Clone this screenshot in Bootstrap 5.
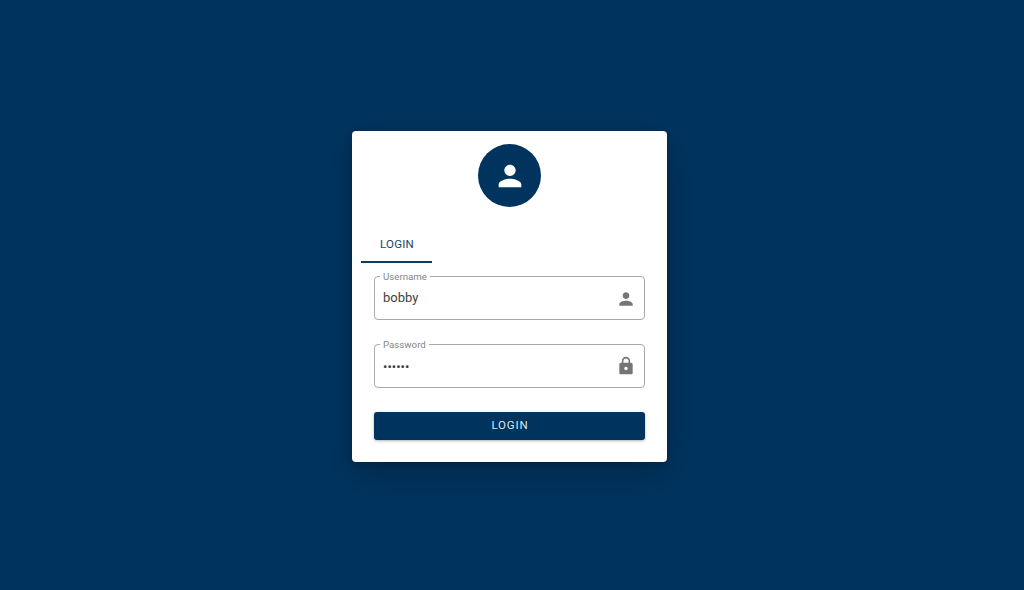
<!DOCTYPE html>
<html lang="en">
<head>
<meta charset="utf-8">
<title>Login</title>
<link href="https://cdn.jsdelivr.net/npm/bootstrap@5.3.0/dist/css/bootstrap.min.css" rel="stylesheet">
<style>
body { background: #00345f; font-family: Roboto, "Liberation Sans", sans-serif; }
.login-stage { min-height: 100vh; padding: 3px 5px 0 0; }
.login-panel { width: 315px; height: 331px; border: 0; border-radius: 4px; padding: 13px 10px 0; box-shadow: 0 12px 34px rgba(0,0,0,.22), 0 2px 6px rgba(0,0,0,.2); }
.avatar-disc { width: 63px; height: 63px; background: #00345f; align-self: center; flex: none; }
.avatar-disc svg { width: 34px; height: 34px; fill: #fff; }
.tab-row { margin: 18px 0 0 -1px; height: 38px; }
.tab-item { width: 71px; height: 38px; color: #1d4260; font-size: 11.5px; font-weight: 400; letter-spacing: .25px; border-bottom: 2px solid #0f3d58; padding: 3px 0 0 1px; }
.form-area { padding: 6px 12px 0 12px; }
.outline-field { border: 1px solid #a9a9a9; border-radius: 4px; padding: 0 8px; margin: 0; height: 51px; min-width: 0; }
.outline-field + .outline-field { margin-top: 17px; }
.outline-field legend { float: none; width: auto; font-size: 9.7px; line-height: 12px; color: #858585; padding: 2px 3px 0; margin: 0 0 0 -3px; }
.field-input { border: 0; outline: 0; padding: 0; background: transparent; color: #3d3d3d; font-size: 13px; font-family: Roboto, "Liberation Sans", sans-serif; height: 24px; min-width: 0; }
.field-input[type=text] { margin-bottom: 2px; }
.field-icon { width: 20px; height: 20px; fill: #757575; flex: none; }
.person-icon { margin-top: 2px; }
.field-body { height: 30px; }
.submit-btn { background: #00345f; color: #dfe7ee; border: 0; border-radius: 3px; height: 28px; font-size: 11.5px; font-weight: 400; letter-spacing: .85px; margin-top: 24px; padding: 0 0 0 1px; box-shadow: 0 1px 3px rgba(0,0,0,.3); }
.submit-btn:hover { background: #00345f; color: #dfe7ee; }
</style>
</head>
<body>
<main class="login-stage d-flex justify-content-center align-items-center">
  <div class="card login-panel d-flex flex-column">
    <div class="avatar-disc rounded-circle d-flex align-items-center justify-content-center">
      <svg viewBox="0 0 24 24" aria-hidden="true"><path d="M12 12c2.21 0 4-1.79 4-4s-1.79-4-4-4-4 1.79-4 4 1.79 4 4 4zm0 2c-2.67 0-8 1.34-8 4v2h16v-2c0-2.66-5.33-4-8-4z"/></svg>
    </div>
    <div class="tab-row d-flex">
      <div class="tab-item d-flex align-items-center justify-content-center">LOGIN</div>
    </div>
    <form class="form-area d-flex flex-column">
      <fieldset class="outline-field">
        <legend>Username</legend>
        <div class="field-body d-flex align-items-center">
          <input class="field-input flex-grow-1" type="text" value="bobby" aria-label="Username">
          <svg class="field-icon person-icon" viewBox="0 0 24 24" aria-hidden="true"><path d="M12 12c2.21 0 4-1.79 4-4s-1.79-4-4-4-4 1.79-4 4 1.79 4 4 4zm0 2c-2.67 0-8 1.34-8 4v2h16v-2c0-2.66-5.33-4-8-4z"/></svg>
        </div>
      </fieldset>
      <fieldset class="outline-field">
        <legend>Password</legend>
        <div class="field-body d-flex align-items-center">
          <input class="field-input flex-grow-1" type="password" value="bobby1" aria-label="Password">
          <svg class="field-icon" viewBox="0 0 24 24" aria-hidden="true"><path d="M18 8h-1V6c0-2.76-2.24-5-5-5S7 3.24 7 6v2H6c-1.1 0-2 .9-2 2v10c0 1.1.9 2 2 2h12c1.1 0 2-.9 2-2V10c0-1.1-.9-2-2-2zm-6 9c-1.1 0-2-.9-2-2s.9-2 2-2 2 .9 2 2-.9 2-2 2zm3.1-9H8.9V6c0-1.71 1.39-3.1 3.1-3.1 1.71 0 3.1 1.39 3.1 3.1v2z"/></svg>
        </div>
      </fieldset>
      <button type="button" class="btn submit-btn w-100">LOGIN</button>
    </form>
  </div>
</main>
<script src="https://cdn.jsdelivr.net/npm/bootstrap@5.3.0/dist/js/bootstrap.bundle.min.js"></script>
</body>
</html>
